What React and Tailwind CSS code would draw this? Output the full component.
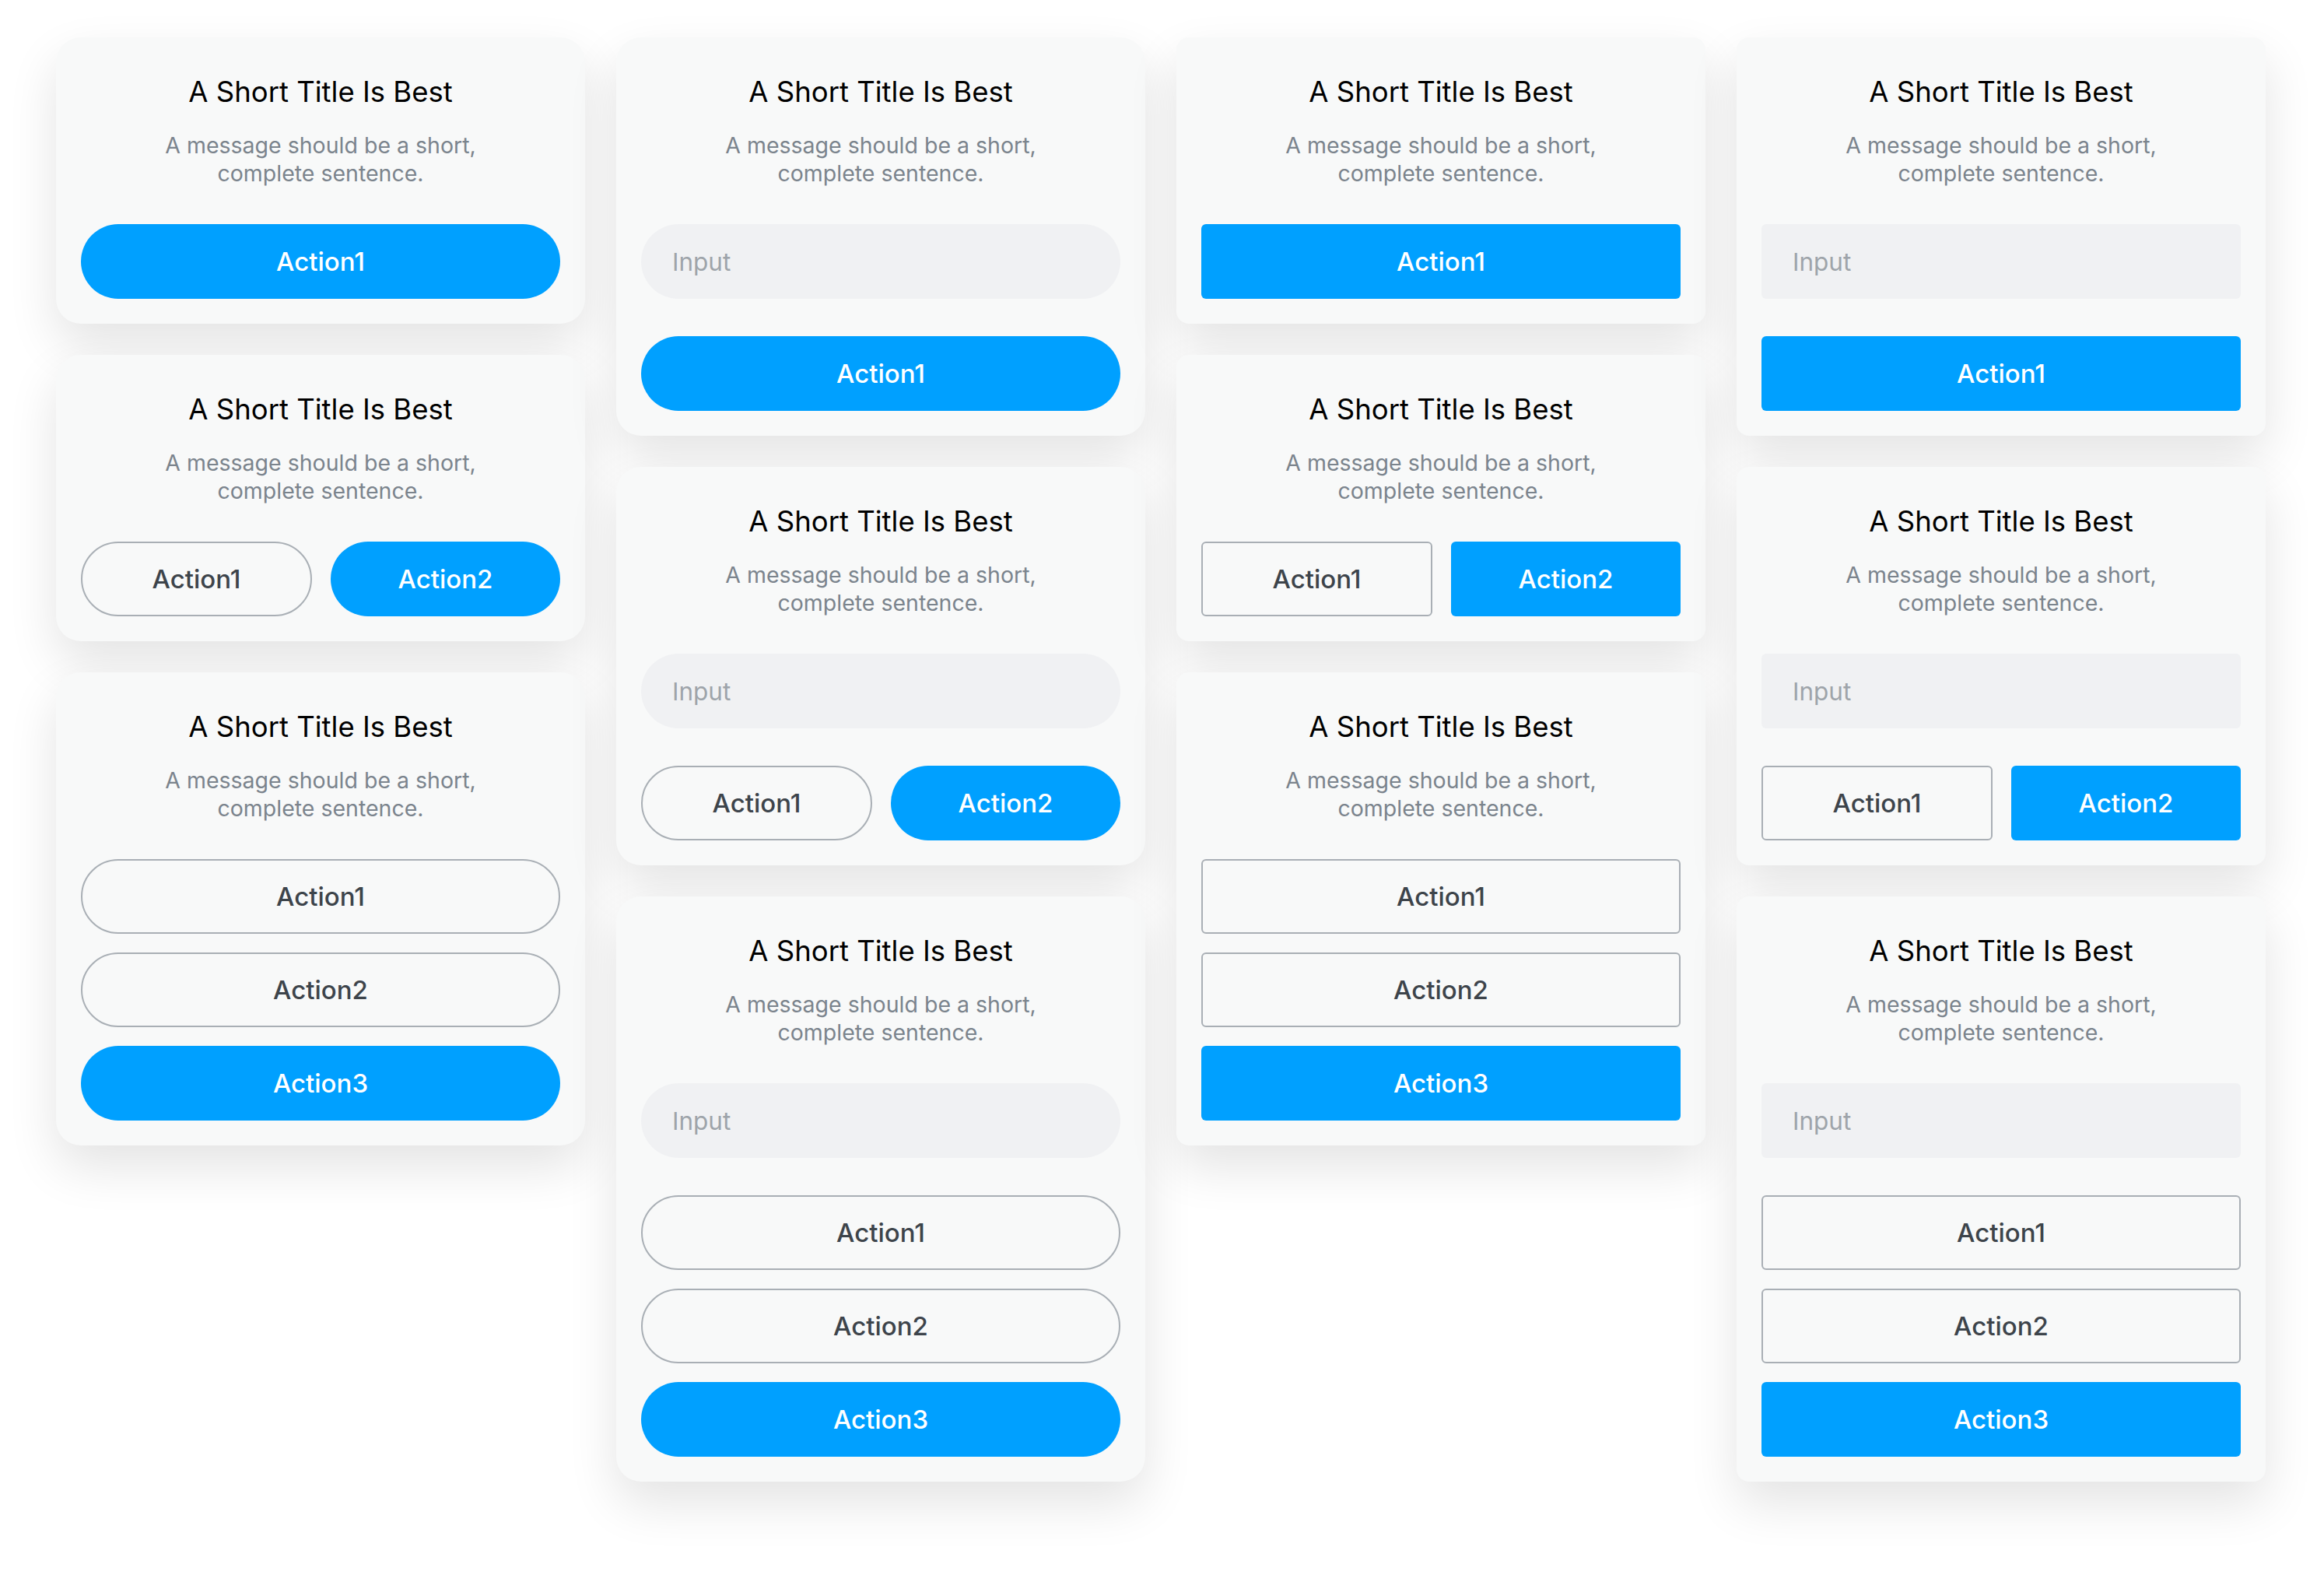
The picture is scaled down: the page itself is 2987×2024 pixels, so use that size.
import React from "react";

const font = { fontFamily: "Inter, 'Noto Sans', sans-serif" };

function Btn({ label, primary, pill }) {
  const shape = pill ? "rounded-full" : "rounded-[6px]";
  return primary ? (
    <button className={`h-[96px] w-full ${shape} bg-[#00a0ff] pt-[2px] text-[33px] font-medium text-white`}>
      {label}
    </button>
  ) : (
    <button className={`h-[96px] w-full ${shape} border-2 border-[#a9afb5] pt-[2px] text-[33px] font-medium text-[#3d444b]`}>
      {label}
    </button>
  );
}

function Card({ pill, input, actions }) {
  return (
    <div
      className={`flex flex-col bg-[#f8f9f9] px-8 pt-[50px] pb-8 shadow-[0_28px_64px_rgba(0,0,0,0.11)] ${
        pill ? "rounded-[32px]" : "rounded-[16px]"
      }`}
    >
      <h2 className="text-center text-[36.5px] leading-[41px] text-black">A Short Title Is Best</h2>
      <p className="mt-[30px] text-center text-[28.5px] leading-[36px] text-[#7b848d]">
        A message should be a short,
        <br />
        complete sentence.
      </p>
      <div className="mt-[47px] flex flex-col gap-12">
        {input && (
          <div
            className={`flex h-[96px] items-center bg-[#f0f1f3] px-10 pt-[2px] text-[31.5px] text-[#9ea4aa] ${
              pill ? "rounded-full" : "rounded-[6px]"
            }`}
          >
            Input
          </div>
        )}
        {actions === 1 && <Btn label="Action1" primary pill={pill} />}
        {actions === 2 && (
          <div className="flex gap-6">
            <Btn label="Action1" pill={pill} />
            <Btn label="Action2" primary pill={pill} />
          </div>
        )}
        {actions === 3 && (
          <div className="flex flex-col gap-6">
            <Btn label="Action1" pill={pill} />
            <Btn label="Action2" pill={pill} />
            <Btn label="Action3" primary pill={pill} />
          </div>
        )}
      </div>
    </div>
  );
}

function Column({ pill, input }) {
  return (
    <div className="flex w-[680px] flex-col gap-10">
      <Card pill={pill} input={input} actions={1} />
      <Card pill={pill} input={input} actions={2} />
      <Card pill={pill} input={input} actions={3} />
    </div>
  );
}

export default function App() {
  return (
    <div className="min-h-[2024px] w-[2987px] bg-white" style={font}>
      <div className="flex items-start gap-10 pl-[72px] pt-[48px]">
        <Column pill />
        <Column pill input />
        <Column />
        <Column input />
      </div>
    </div>
  );
}
